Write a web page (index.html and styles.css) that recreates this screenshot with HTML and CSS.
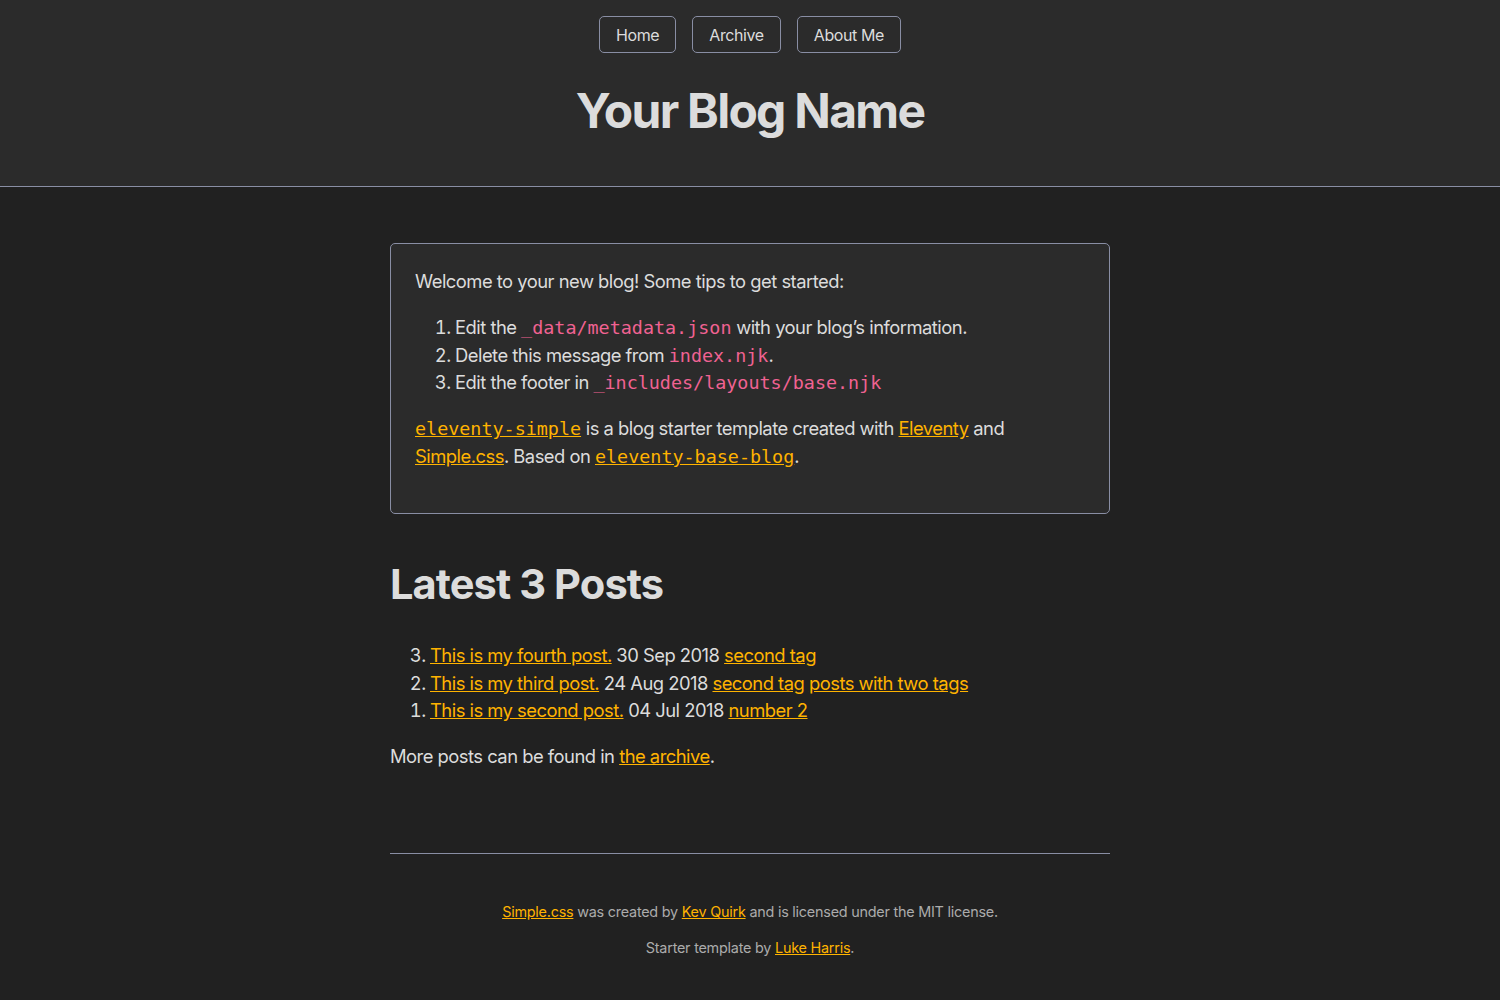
FILE: index.html
```html
<!DOCTYPE html>
<html lang="en">
<head>
<meta charset="utf-8">
<title>Your Blog Name</title>
<link rel="stylesheet" href="styles.css">
</head>
<body>
<header class="site-header">
  <nav class="site-nav">
    <a class="nav-link" href="#">Home</a>
    <a class="nav-link" href="#">Archive</a>
    <a class="nav-link" href="#">About Me</a>
  </nav>
  <h1 class="site-title">Your Blog Name</h1>
</header>
<main class="main">
  <div class="notice">Welcome to your new blog! Some tips to get started:
    <ol class="tips">
      <li>Edit the <code>_data/metadata.json</code> with your blog’s information.</li>
      <li>Delete this message from <code>index.njk</code>.</li>
      <li>Edit the footer in <code>_includes/layouts/base.njk</code></li>
    </ol>
    <p class="para"><a href="#"><code class="link-code">eleventy-simple</code></a> is a blog starter template created with <a href="#">Eleventy</a> and <a href="#">Simple.css</a>. Based on <a href="#"><code class="link-code">eleventy-base-blog</code></a>.</p>
  </div>
  <h2 class="section-title">Latest 3 Posts</h2>
  <ol class="postlist" reversed>
    <li><a href="#">This is my fourth post.</a> 30 Sep 2018 <a href="#">second tag</a></li>
    <li><a href="#">This is my third post.</a> 24 Aug 2018 <a href="#">second tag</a> <a href="#">posts with two tags</a></li>
    <li><a href="#">This is my second post.</a> 04 Jul 2018 <a href="#">number 2</a></li>
  </ol>
  <p class="para">More posts can be found in <a href="#">the archive</a>.</p>
</main>
<footer class="site-footer">
  <p class="foot-p"><a href="#">Simple.css</a> was created by <a href="#">Kev Quirk</a> and is licensed under the MIT license.</p>
  <p class="foot-p">Starter template by <a href="#">Luke Harris</a>.</p>
</footer>
</body>
</html>
```
FILE: styles.css
```css
html {
  font-family: Inter, "Noto Sans", sans-serif;
  font-size: 16px;
}
body {
  margin: 0;
  background: #212121;
  color: #dcdcdc;
  font-size: 1.15rem;
  line-height: 1.5;
  letter-spacing: -0.028em;
  display: grid;
  grid-template-columns: 1fr min(45rem, 90%) 1fr;
}
a { color: #ffb300; }
code {
  font-family: "DejaVu Sans Mono", monospace;
  color: #f06292;
  font-size: 1em;
  letter-spacing: 0;
}
.link-code { color: #ffb300; }
.site-header {
  grid-column: 1 / -1;
  background: #2b2b2b;
  border-bottom: 1px solid #898ea4;
  text-align: center;
  padding: 0 0.5rem 2rem 0.5rem;
}
.site-nav {
  display: flex;
  justify-content: center;
  gap: 1rem;
  padding-top: 1rem;
  font-size: 1rem;
  line-height: 2;
  letter-spacing: -0.025em;
}
.nav-link {
  border: 1px solid #898ea4;
  border-radius: 5px;
  color: #dcdcdc;
  padding: 0.1rem 1rem;
  text-decoration: none;
}
.site-title {
  font-size: 3rem;
  line-height: 1.1;
  margin: 2rem auto 1rem;
  font-weight: 700;
  letter-spacing: -0.036em;
}
.main {
  grid-column: 2;
  padding-top: 1.5rem;
}
.notice {
  background: #2b2b2b;
  border: 1px solid #898ea4;
  border-radius: 5px;
  padding: 1.5rem;
  margin: 2rem 0;
}
.tips, .postlist {
  margin: 1em 0;
  padding-left: 40px;
}
.para { margin: 1em 0; }
.section-title {
  font-size: 2.6rem;
  line-height: 1.1;
  margin: 3rem 0 0.83em;
  font-weight: 700;
  letter-spacing: -0.022em;
}
.site-footer {
  grid-column: 2;
  margin-top: 4rem;
  border-top: 1px solid #898ea4;
  padding: 2rem 1rem 1.5rem;
  color: #ababab;
  font-size: 0.9rem;
  letter-spacing: -0.016em;
  text-align: center;
}
.foot-p { margin: 1em 0; }
```
